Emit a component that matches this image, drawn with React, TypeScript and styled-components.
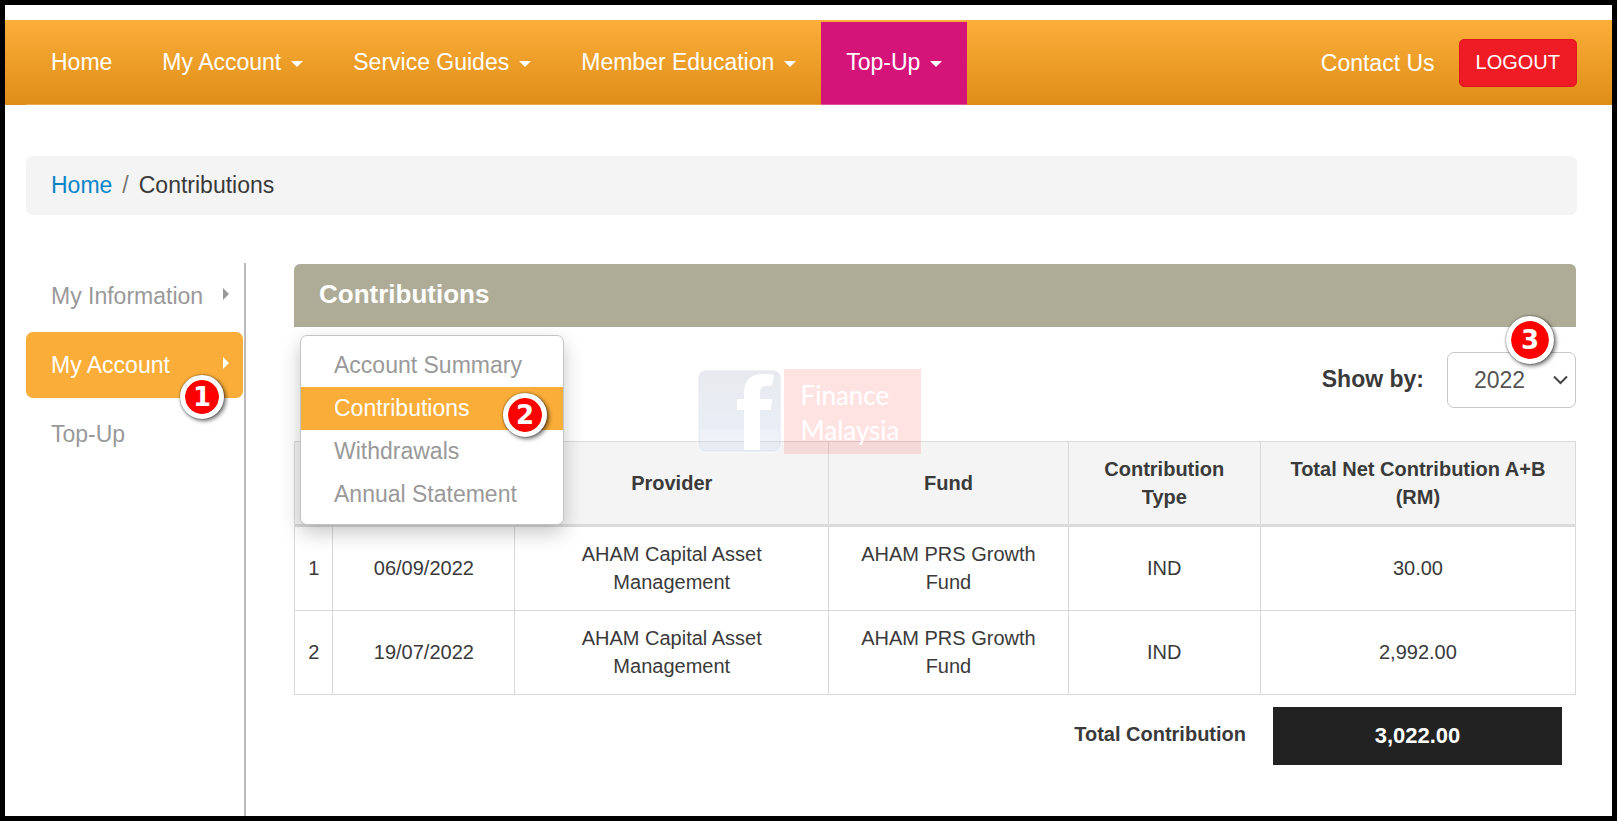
import React from "react";
import styled, { createGlobalStyle, css } from "styled-components";

const GlobalStyle = createGlobalStyle`
  *, *::before, *::after { box-sizing: border-box; }
  body {
    margin: 0;
    background: #fff;
    color: #3a3a3a;
    font-family: "Liberation Sans", Arial, sans-serif;
    font-size: 23px;
    line-height: 26px;
  }
  a { color: inherit; text-decoration: none; }
  ul, ol { list-style: none; margin: 0; padding: 0; }
`;

const orange = "#faad38";

const Frame = styled.div`
  position: relative;
  display: flex;
  flex-direction: column;
  min-height: 100vh;
  padding-top: 15px;
  border: 5px solid #000;
`;

const Navbar = styled.header`
  display: flex;
  justify-content: space-between;
  align-items: center;
  padding: 0 35px 0 21px;
  background: linear-gradient(#fcae3a, #de8e18);
  color: #fff;
`;

const NavList = styled.ul`
  display: flex;
  padding-top: 2px;
`;

const NavLink = styled.a<{ $active?: boolean }>`
  display: flex;
  align-items: center;
  gap: 10px;
  padding: 27px 25px 29px;
  border-bottom: 1px solid rgba(255, 255, 255, 0.25);
  background: ${(p) => (p.$active ? "#d5147a" : "transparent")};
  white-space: nowrap;
`;

const Caret = styled.span`
  margin-top: 3px;
  border: 6px solid transparent;
  border-top-color: currentColor;
  border-bottom: 0;
`;

const NavActions = styled.div`
  display: flex;
  align-items: center;
  gap: 24px;
`;

const LogoutButton = styled.button`
  height: 48px;
  padding: 0 16px 2px;
  border: 1px solid #e01420;
  border-radius: 5px;
  background: #ef1c25;
  color: #fff;
  font: inherit;
  font-size: 20px;
`;

const Content = styled.div`
  display: flex;
  flex: 1;
  flex-direction: column;
  gap: 48px;
  padding: 51px 35px 0 21px;
`;

const Breadcrumb = styled.ol`
  display: flex;
  gap: 10px;
  padding: 16px 25px 17px;
  border-radius: 7px;
  background: #f4f4f4;

  a { color: #0a84ca; }
`;

const Slash = styled.span`
  margin-right: 10px;
  color: #777;
`;

const Columns = styled.div`
  display: flex;
  flex: 1;
  gap: 48px;
`;

const Sidebar = styled.nav`
  flex: 0 0 220px;
  padding-right: 1px;
  border-right: 2px solid #bbb;
`;

const SideList = styled.ul`
  display: flex;
  flex-direction: column;
  gap: 3px;
`;

const SideItem = styled.li`
  position: relative;
`;

const SideLink = styled.a<{ $active?: boolean }>`
  display: flex;
  align-items: center;
  justify-content: space-between;
  padding: 20px 14px 20px 25px;
  border-radius: 7px;
  color: #999;
  ${(p) => p.$active && css`
    background: ${orange};
    color: #fff;
  `}
`;

const SideArrow = styled.span`
  margin-bottom: 4px;
  border: 6px solid transparent;
  border-left-color: currentColor;
  border-right: 0;
`;

const Flyout = styled.ul`
  position: absolute;
  z-index: 2;
  top: 3px;
  left: 274px;
  width: 264px;
  padding: 8px 0;
  border: 1px solid #c4c4c4;
  border-radius: 7px;
  background: #fff;
  box-shadow: 0 8px 20px rgba(0, 0, 0, 0.22);
`;

const FlyoutLink = styled.a<{ $active?: boolean }>`
  display: block;
  padding: 0 33px;
  background: ${(p) => (p.$active ? orange : "transparent")};
  color: ${(p) => (p.$active ? "#fff" : "#999")};
  line-height: 43px;
`;

const Step = styled.span<{ $size: number; $top: number; $right: number }>`
  position: absolute;
  z-index: 3;
  top: ${(p) => p.$top}px;
  right: ${(p) => p.$right}px;
  display: flex;
  align-items: center;
  justify-content: center;
  width: ${(p) => p.$size}px;
  height: ${(p) => p.$size}px;
  border: 5px solid #fff;
  border-radius: 50%;
  background: #fe0000;
  background-clip: padding-box;
  box-shadow: 0 0 2px rgba(0, 0, 0, 0.6), 2px 2px 4px rgba(0, 0, 0, 0.55);
  color: #fff;
  font: bold 26px/26px "DejaVu Sans", sans-serif;
`;

const Main = styled.main`
  flex: 1;
  min-width: 0;
  padding: 1px 1px 50px 0;
`;

const PanelTitle = styled.h1`
  margin: 0;
  padding: 15px 25px 18px;
  border-radius: 6px 6px 0 0;
  background: #aeab97;
  color: #fff;
  font-size: 26px;
  line-height: 30px;
`;

const Filter = styled.div`
  display: flex;
  align-items: center;
  justify-content: flex-end;
  gap: 23px;
  padding: 25px 0 33px;
`;

const FilterLabel = styled.label`
  padding-bottom: 3px;
  font-weight: bold;
`;

const SelectWrap = styled.span`
  position: relative;
  width: 129px;

  svg {
    position: absolute;
    top: 23px;
    right: 8px;
    pointer-events: none;
  }
`;

const YearSelect = styled.select`
  display: block;
  width: 100%;
  height: 56px;
  padding: 0 26px;
  border: 1px solid #c8c8c8;
  border-radius: 7px;
  background: #fff;
  color: #555;
  font: inherit;
  appearance: none;
`;

const Table = styled.table`
  width: 100%;
  border-collapse: collapse;
  table-layout: fixed;
  font-size: 20px;
  line-height: 28px;
  text-align: center;

  th, td {
    padding: 13px 14px 14px;
    border: 1px solid #d9d9d9;
  }
  th:first-child, td:first-child {
    padding-left: 4px;
    padding-right: 4px;
  }
  thead th {
    padding-bottom: 13px;
    border-bottom: 3px solid #dadada;
    background: #f4f4f4;
  }
`;

const Col = styled.col<{ $width: string }>`
  width: ${(p) => p.$width};
`;

const Total = styled.div`
  display: flex;
  align-items: center;
  justify-content: flex-end;
  gap: 27px;
  padding: 12px 14px 0 0;
  font-weight: bold;
`;

const TotalLabel = styled.span`
  padding-bottom: 4px;
  font-size: 20px;
`;

const TotalValue = styled.output`
  width: 289px;
  background: #222;
  color: #fff;
  font-size: 22px;
  line-height: 58px;
  text-align: center;
`;

const Watermark = styled.div`
  position: absolute;
  z-index: 1;
  inset: 0;
  display: flex;
  align-items: center;
  justify-content: center;
  gap: 2px;
  padding-top: 1px;
  pointer-events: none;
`;

const WatermarkName = styled.div`
  width: 137px;
  padding: 9px 0 6px 17px;
  background: rgba(255, 0, 0, 0.11);
  color: #fff;
  font: 26px/35px Lato, sans-serif;
`;

const navItems = [
  { label: "Home" },
  { label: "My Account", menu: true },
  { label: "Service Guides", menu: true },
  { label: "Member Education", menu: true },
  { label: "Top-Up", menu: true, active: true },
];

const flyoutItems = ["Account Summary", "Contributions", "Withdrawals", "Annual Statement"];

const columnWidths = ["3%", "14.2%", "24.5%", "18.7%", "15%", "24.6%"];

const rows = [
  ["1", "06/09/2022", "AHAM Capital Asset Management", "AHAM PRS Growth Fund", "IND", "30.00"],
  ["2", "19/07/2022", "AHAM Capital Asset Management", "AHAM PRS Growth Fund", "IND", "2,992.00"],
];

function FacebookMark() {
  return (
    <svg width="85" height="85" viewBox="0 0 85 85" aria-hidden="true">
      <defs>
        <linearGradient id="mark" x1="0" y1="0" x2="0" y2="1">
          <stop offset="0" stopColor="#3b4a70" stopOpacity="0.12" />
          <stop offset="1" stopColor="#4a7cc8" stopOpacity="0.12" />
        </linearGradient>
      </defs>
      <rect x="1" y="1" width="83" height="82" rx="8" fill="url(#mark)" stroke="#fff" strokeOpacity="0.35" strokeWidth="2" />
      <rect x="3" y="61" width="79" height="20" rx="4" fill="#fff" fillOpacity="0.25" />
      <path
        d="M47 81V41H40V30H47V24C47 11 54 5 66 5C70 5 74 5 77 6L75 17C66 16 63 18 63 24V30H75L74 41H63V81Z"
        fill="#fff"
      />
    </svg>
  );
}

export default function App() {
  return (
    <>
      <GlobalStyle />
      <Frame>
        <Navbar>
          <nav>
            <NavList>
              {navItems.map((item) => (
                <li key={item.label}>
                  <NavLink href="#" $active={item.active}>
                    {item.label}
                    {item.menu && <Caret />}
                  </NavLink>
                </li>
              ))}
            </NavList>
          </nav>
          <NavActions>
            <a href="#">Contact Us</a>
            <LogoutButton type="button">LOGOUT</LogoutButton>
          </NavActions>
        </Navbar>

        <Content>
          <Breadcrumb>
            <li><a href="#">Home</a></li>
            <li><Slash>/</Slash>Contributions</li>
          </Breadcrumb>

          <Columns>
            <Sidebar>
              <SideList>
                <SideItem>
                  <SideLink href="#">My Information<SideArrow /></SideLink>
                </SideItem>
                <SideItem>
                  <SideLink href="#" $active>My Account<SideArrow /></SideLink>
                  <Step $size={44} $top={43} $right={19}>1</Step>
                  <Flyout>
                    {flyoutItems.map((label) => (
                      <li key={label}>
                        <FlyoutLink href="#" $active={label === "Contributions"}>{label}</FlyoutLink>
                      </li>
                    ))}
                    <Step $size={44} $top={57} $right={16}>2</Step>
                  </Flyout>
                </SideItem>
                <SideItem>
                  <SideLink href="#">Top-Up</SideLink>
                </SideItem>
              </SideList>
            </Sidebar>

            <Main>
              <PanelTitle>Contributions</PanelTitle>
              <Filter>
                <FilterLabel htmlFor="year">Show by:</FilterLabel>
                <SelectWrap>
                  <YearSelect id="year" defaultValue="2022">
                    <option>2022</option>
                  </YearSelect>
                  <svg width="15" height="10" viewBox="0 0 15 10" fill="none" stroke="#444" strokeWidth="2" aria-hidden="true">
                    <path d="M1 1.5L7.5 8L14 1.5" />
                  </svg>
                  <Step $size={48} $top={-36} $right={22}>3</Step>
                </SelectWrap>
              </Filter>

              <Table>
                <colgroup>
                  {columnWidths.map((width, i) => <Col key={i} $width={width} />)}
                </colgroup>
                <thead>
                  <tr>
                    <th />
                    <th />
                    <th>Provider</th>
                    <th>Fund</th>
                    <th>Contribution Type</th>
                    <th>Total Net Contribution A+B (RM)</th>
                  </tr>
                </thead>
                <tbody>
                  {rows.map((row) => (
                    <tr key={row[0]}>
                      {row.map((cell, i) => <td key={i}>{cell}</td>)}
                    </tr>
                  ))}
                </tbody>
              </Table>

              <Total>
                <TotalLabel>Total Contribution</TotalLabel>
                <TotalValue>3,022.00</TotalValue>
              </Total>
            </Main>
          </Columns>
        </Content>

        <Watermark>
          <FacebookMark />
          <WatermarkName>Finance<br />Malaysia</WatermarkName>
        </Watermark>
      </Frame>
    </>
  );
}
